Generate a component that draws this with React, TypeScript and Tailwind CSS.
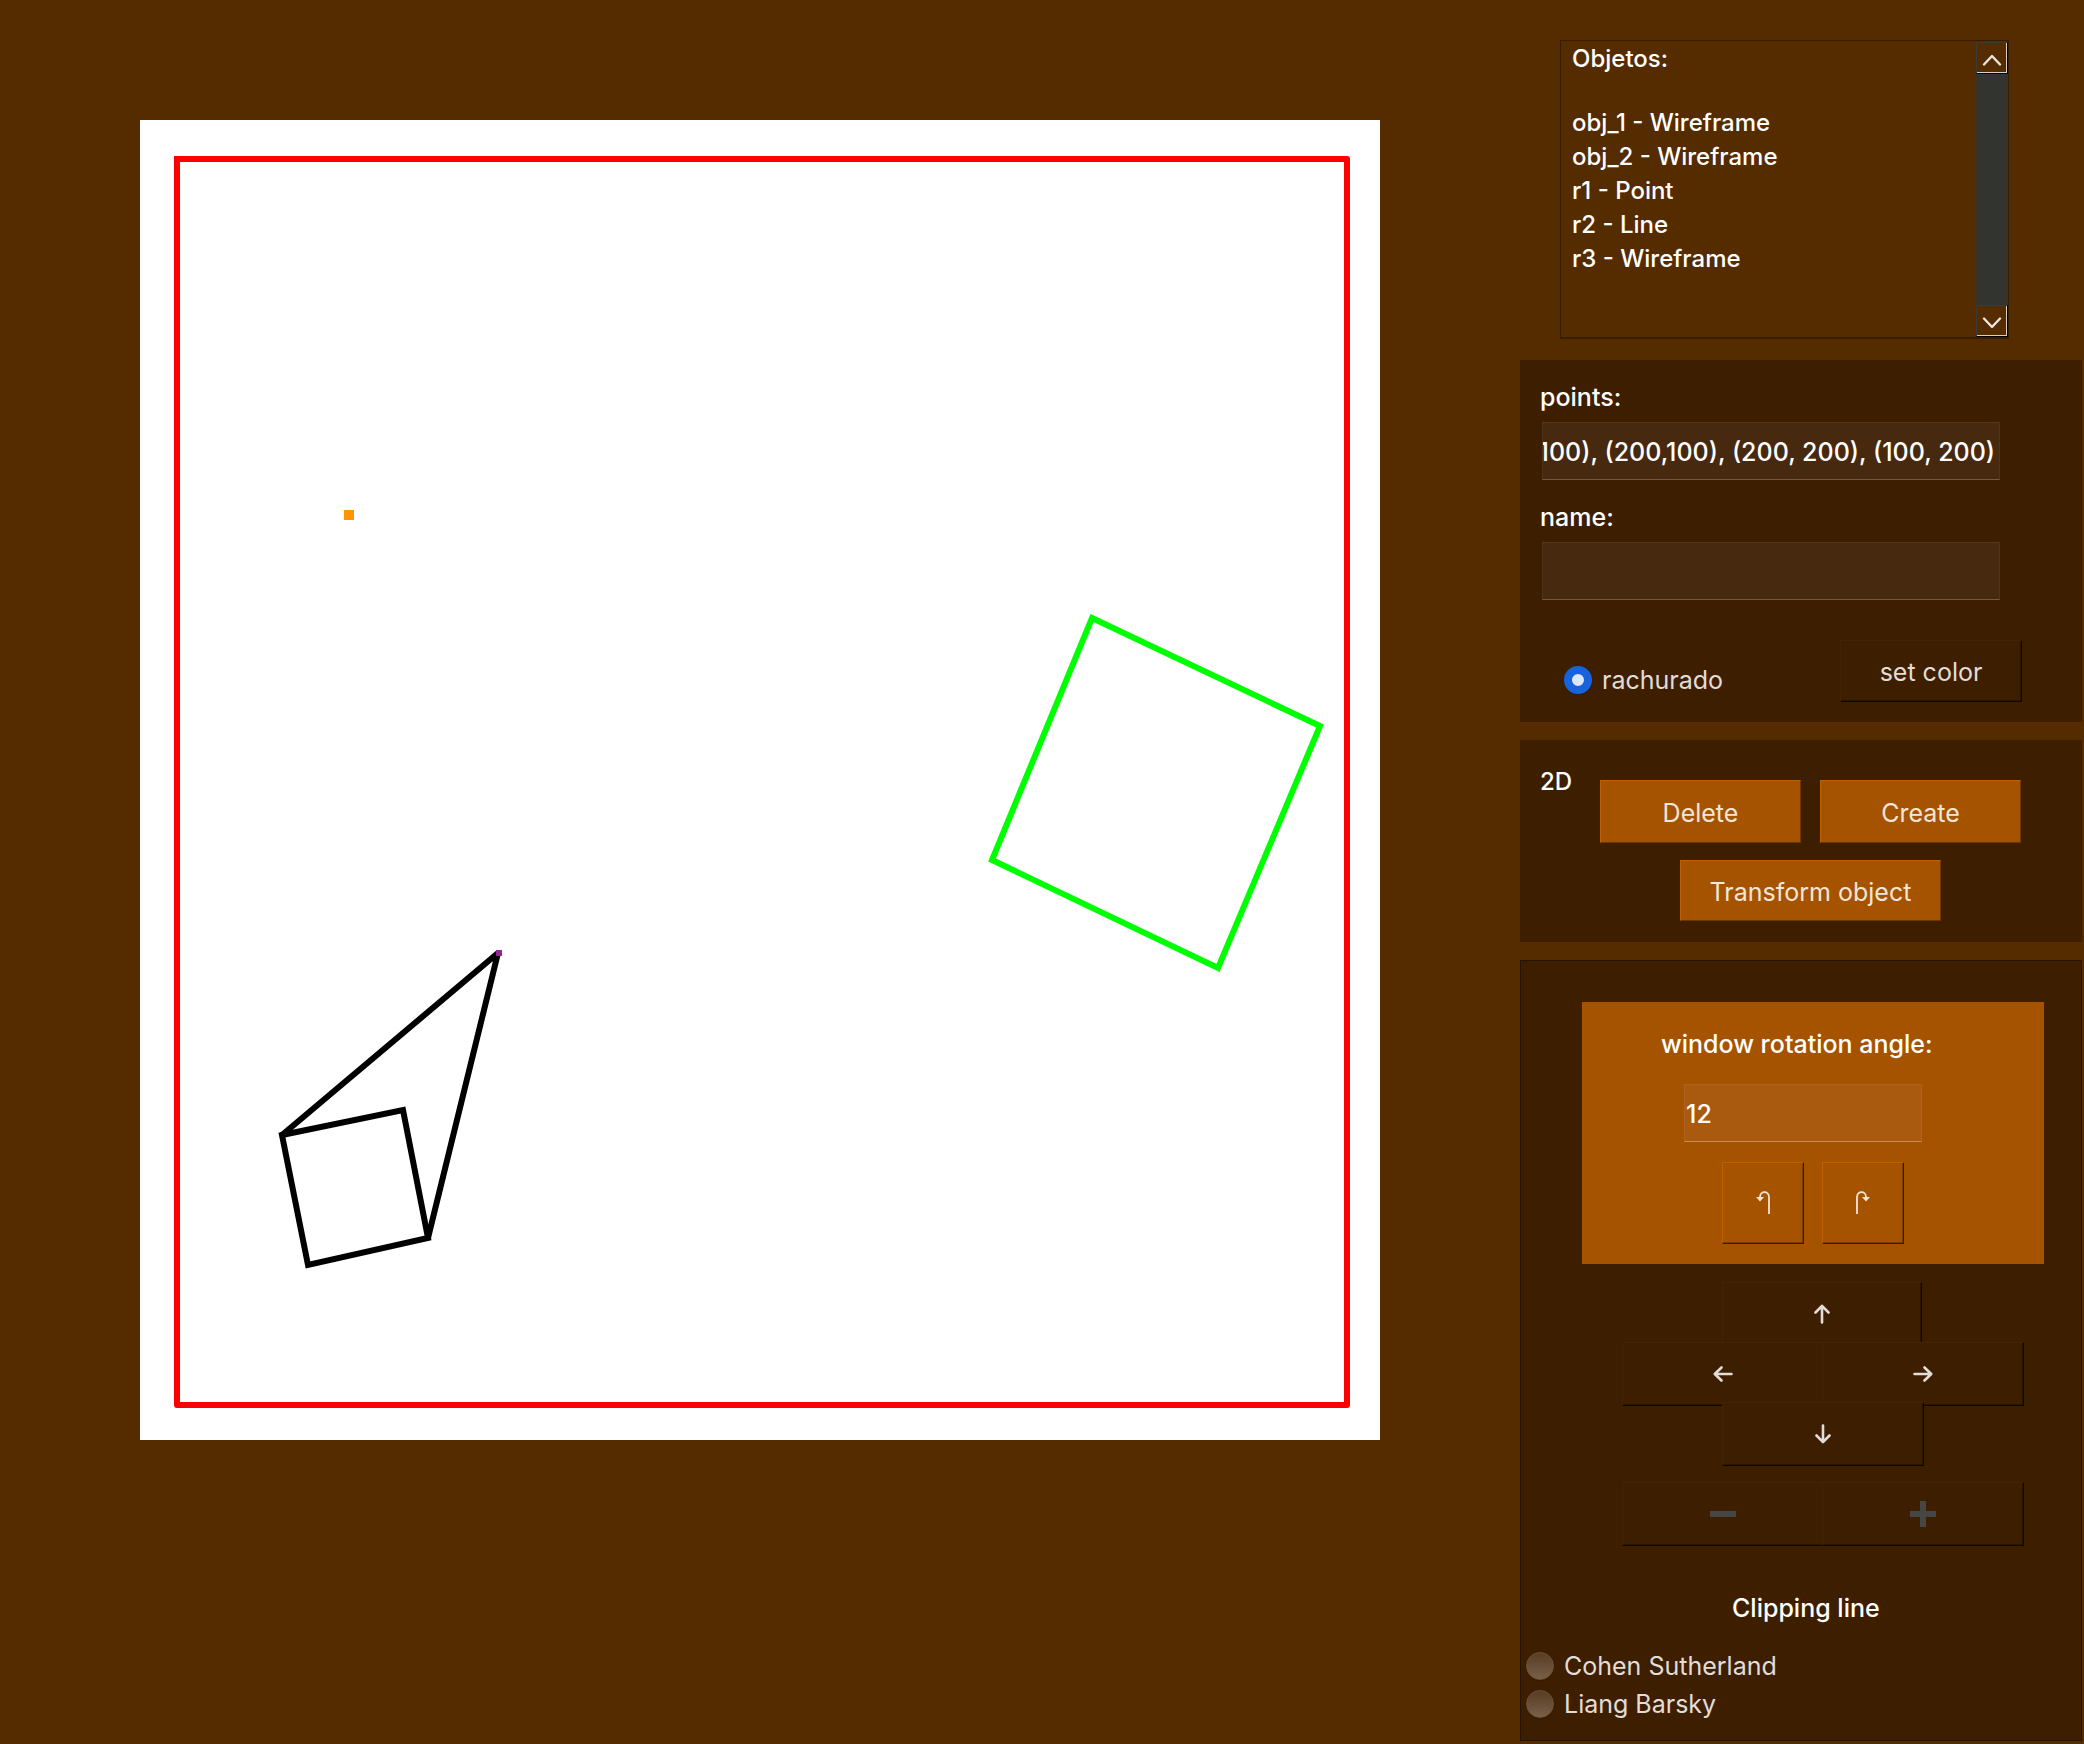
import { useEffect, useRef } from "react";
import type { ReactNode } from "react";

const objects = [
  "obj_1 - Wireframe",
  "obj_2 - Wireframe",
  "r1 - Point",
  "r2 - Line",
  "r3 - Wireframe",
];

const darkButton =
  "flex items-center justify-center bg-[#3d1f00] text-[#e2ddd9] border border-t-[#462300] border-l-[#462300] border-r-[#0f0800] border-b-[#0f0800] shadow-[inset_-1px_-1px_0_#2a1500]";
const orangeButton =
  "flex items-center justify-center bg-[#a65300] pt-0.5 text-[#f2e5d9] border border-t-[#bf6000] border-l-[#bf6000] border-r-[#6e3700] border-b-[#6e3700]";
const turnButton =
  "flex size-[82px] items-center justify-center bg-[#a65300] text-[#f2e5d9] border border-t-[#bf6000] border-l-[#bf6000] border-r-[#331a00] border-b-[#331a00] shadow-[inset_-1px_-1px_0_#7a3d00]";
const darkField =
  "block h-[58px] w-full bg-[#46290f] pt-0.5 text-[25px] font-medium text-white outline-none border border-t-[#533720] border-x-[#503319] border-b-[#78593f]";

function Drawing() {
  return (
    <svg viewBox="0 0 1240 1320" className="block h-auto w-full bg-white" role="img" aria-label="Viewport">
      <g transform="translate(-140 -120)" fill="none" strokeWidth="6">
        <path d="M177 159H1347V1405H177V159" stroke="#ff0000" strokeLinejoin="round" strokeLinecap="square" />
        <path d="M1092 618 L1320 726 L1218 968 L992 860 Z" stroke="#00ff00" />
        <path d="M282 1135 L403 1110 L428 1238 L308 1265 Z" stroke="#000" />
        <path d="M282 1135 L498 953 L428 1238" stroke="#000" strokeLinejoin="bevel" />
        <rect x="496" y="950" width="6" height="6" fill="#982298" />
        <rect x="344" y="510" width="10" height="10" fill="#ff9300" />
      </g>
    </svg>
  );
}

function Arrow({ turn }: { turn?: string }) {
  return (
    <svg viewBox="0 0 20 20" className={`size-5 ${turn ?? ""}`} fill="none" stroke="currentColor" strokeWidth="2.6" strokeLinecap="round" strokeLinejoin="round" aria-hidden="true">
      <path d="M10 18.5V2M3.5 8.5L10 1.8L16.5 8.5" />
    </svg>
  );
}

function TurnIcon({ flip }: { flip?: boolean }) {
  return (
    <svg viewBox="0 0 14 24" className={flip ? "h-6 w-3.5 -scale-x-100" : "h-6 w-3.5"} aria-hidden="true">
      <path d="M13 23V6C13 -0.5 4 -0.5 4 6V7" fill="none" stroke="currentColor" strokeWidth="1.8" />
      <path d="M0 6H8L4 10.5Z" fill="currentColor" />
    </svg>
  );
}

function Radio({ name, label, checked }: { name: string; label: string; checked?: boolean }) {
  return (
    <label className="flex items-center gap-2.5 text-[25px] leading-[38px] text-[#e2ddd9]">
      <input
        type="radio"
        name={name}
        defaultChecked={checked}
        className="size-7 appearance-none rounded-full border border-[#6d5239] bg-linear-to-b from-[#593d24] to-[#786049] shadow-sm checked:border-8 checked:border-[#1763de] checked:bg-[#dde8fb] checked:bg-none"
      />
      {label}
    </label>
  );
}

function ScrollButton({ label, children }: { label: string; children: ReactNode }) {
  return (
    <button aria-label={label} className="flex h-8 w-8 items-center justify-center border border-t-[#3b3a35] border-l-[#3b3a35] border-r-black border-b-black bg-[#552b00] text-[#ece5df] shadow-[inset_-1px_-1px_0_#d8d0c8]">
      <svg viewBox="0 0 20 12" className="mt-1 h-3 w-5" fill="none" stroke="currentColor" strokeWidth="2.4" strokeLinecap="round" strokeLinejoin="round" aria-hidden="true">
        {children}
      </svg>
    </button>
  );
}

export default function App() {
  const points = useRef<HTMLInputElement>(null);

  // Keep the end of the point list in view.
  useEffect(() => {
    if (points.current) points.current.scrollLeft = points.current.scrollWidth;
  }, []);

  return (
    <main className="flex min-h-screen items-start bg-[#552b00] pr-0.5 font-[Inter,sans-serif] text-[25px] leading-8 text-white">
      <section className="min-w-0 flex-1 px-[140px] pt-[120px]">
        <Drawing />
      </section>

      <aside className="w-[562px] shrink-0 pt-10">
        <section className="ml-10 flex h-[299px] w-[449px] justify-between border border-b-2 border-[#3a1d00] pl-[11px]">
          <div className="pt-px text-[24px] leading-[34px] font-medium">
            <h2 className="mb-[30px]">Objetos:</h2>
            <ul>
              {objects.map((name) => (
                <li key={name}>{name}</li>
              ))}
            </ul>
          </div>
          <div className="flex flex-col bg-[repeating-conic-gradient(#333_0_25%,#552b00_0_50%)] bg-size-[2px_2px]">
            <div className="h-px bg-[#552b00]" />
            <ScrollButton label="Scroll up">
              <path d="M2 10.5L10 2L18 10.5" />
            </ScrollButton>
            <div className="flex-1" />
            <ScrollButton label="Scroll down">
              <path d="M2 1.5L10 10L18 1.5" />
            </ScrollButton>
          </div>
        </section>

        <section className="mt-[21px] bg-[#3d1f00] pt-[21px] pr-[60px] pb-5 pl-5">
          <label htmlFor="points" className="block font-medium">points:</label>
          <div className="mt-[9px] mr-[22px] ml-0.5">
            <input id="points" ref={points} defaultValue="(100,100), (200,100), (200, 200), (100, 200)" className={`${darkField} pr-1`} />
          </div>
          <label htmlFor="name" className="mt-[21px] block font-medium">name:</label>
          <div className="mt-[9px] mr-[22px] ml-0.5">
            <input id="name" className={darkField} />
          </div>
          <div className="mt-10 flex items-start justify-between pl-6">
            <div className="pt-[21px]">
              <Radio name="fill" label="rachurado" checked />
            </div>
            <button className={`${darkButton} h-[62px] w-[182px] pt-0.5`}>set color</button>
          </div>
        </section>

        <section className="mt-[18px] flex bg-[#3d1f00] pt-[26px] pb-[21px] pl-5">
          <h2 className="w-[60px] text-[24px] font-medium">2D</h2>
          <div className="flex w-[421px] flex-wrap justify-center gap-x-[19px] gap-y-[17px] pt-3.5">
            <button className={`${orangeButton} h-[63px] w-[201px]`}>Delete</button>
            <button className={`${orangeButton} h-[63px] w-[201px]`}>Create</button>
            <button className={`${orangeButton} h-[61px] w-[261px]`}>Transform object</button>
          </div>
        </section>

        <section className="mt-[18px] border border-[#261300] bg-[#3d1f00] pt-[41px] pb-[17px]">
          <div className="mr-[37px] ml-[61px] bg-[#a65300] pt-[26px] pb-5">
            <label htmlFor="angle" className="block pl-[79px] font-medium">window rotation angle:</label>
            <input
              id="angle"
              defaultValue="12"
              className="mt-6 ml-[102px] block h-[58px] w-[238px] border border-x-[#ae6420] border-t-[#ad631f] border-b-[#c98d57] bg-[#aa5a0f] pt-0.5 pl-px font-medium text-white outline-none"
            />
            <div className="mt-5 flex gap-[18px] pl-[140px]">
              <button aria-label="Rotate left" className={turnButton}>
                <TurnIcon />
              </button>
              <button aria-label="Rotate right" className={turnButton}>
                <TurnIcon flip />
              </button>
            </div>
          </div>

          <div className="mt-[18px] ml-[101px] flex w-[402px] flex-col">
            <button aria-label="Move up" className={`${darkButton} ml-[100px] h-16 w-[200px]`}>
              <Arrow />
            </button>
            <div className="z-1 -mt-1 flex">
              <button aria-label="Move left" className={`${darkButton} h-16 w-[202px]`}>
                <Arrow turn="-rotate-90" />
              </button>
              <button aria-label="Move right" className={`${darkButton} -ml-0.5 h-16 w-[202px]`}>
                <Arrow turn="rotate-90" />
              </button>
            </div>
            <button aria-label="Move down" className={`${darkButton} z-2 -mt-1 ml-[100px] h-16 w-[202px]`}>
              <Arrow turn="rotate-180" />
            </button>
            <div className="mt-4 flex">
              <button aria-label="Zoom out" className={`${darkButton} h-16 w-[202px]`}>
                <svg viewBox="0 0 26 26" className="size-[26px]" aria-hidden="true">
                  <path d="M0 10H26V16H0Z" fill="#464646" />
                </svg>
              </button>
              <button aria-label="Zoom in" className={`${darkButton} -ml-0.5 h-16 w-[202px]`}>
                <svg viewBox="0 0 26 26" className="size-[26px]" aria-hidden="true">
                  <path d="M0 10H10V0H16V10H26V16H16V26H10V16H0Z" fill="#464646" />
                </svg>
              </button>
            </div>
          </div>

          <h2 className="mt-[46px] pl-[211px] font-medium">Clipping line</h2>
          <div className="mt-[23px] pl-[5px]">
            <Radio name="clipping" label="Cohen Sutherland" />
            <Radio name="clipping" label="Liang Barsky" />
          </div>
        </section>
      </aside>
    </main>
  );
}
